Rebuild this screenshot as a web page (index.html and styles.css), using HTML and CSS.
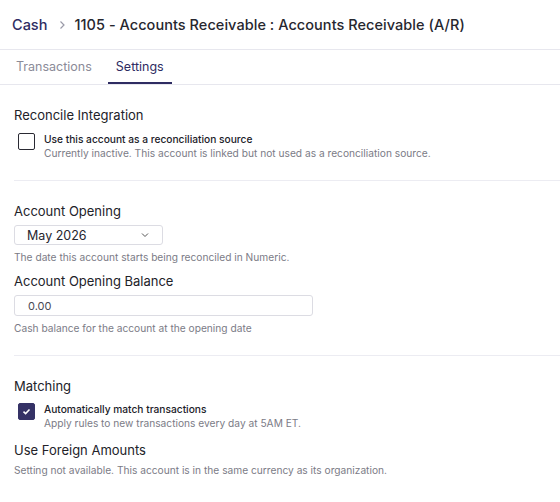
FILE: index.html
```html
<!DOCTYPE html>
<html>
<head lang="en">
    <meta charset="UTF-8">
    <link rel="stylesheet" href="styles.css">
    <title>Account Settings</title>
</head>
<body>
<div class="header">
    <a class="crumb" href="javascript:;">Cash</a>
    <svg class="crumb_sep" width="12" height="12" viewBox="0 0 12 12"><path d="M4.5 2.5 L8 6 L4.5 9.5" fill="none" stroke="#9a9aa8" stroke-width="1.2"/></svg>
    <span class="title">1105 - Accounts Receivable : Accounts Receivable (A/R)</span>
</div>
<div class="tabs">
    <a class="tab" href="javascript:;">Transactions</a>
    <a class="tab active" href="javascript:;">Settings</a>
</div>
<div class="content">
    <div class="section">
        <h3>Reconcile Integration</h3>
        <div class="check_row">
            <span class="box"></span>
            <div>
                <div class="check_label">Use this account as a reconciliation source</div>
                <div class="help">Currently inactive. This account is linked but not used as a reconciliation source.</div>
            </div>
        </div>
    </div>
    <div class="section">
        <h3>Account Opening</h3>
        <div class="select">
            <span>May 2026</span>
            <svg width="10" height="10" viewBox="0 0 10 10"><path d="M2 3.5 L5 6.5 L8 3.5" fill="none" stroke="#555" stroke-width="1"/></svg>
        </div>
        <div class="help under">The date this account starts being reconciled in Numeric.</div>
        <h3 class="second">Account Opening Balance</h3>
        <div class="input">0.00</div>
        <div class="help under">Cash balance for the account at the opening date</div>
    </div>
    <div class="section last">
        <h3>Matching</h3>
        <div class="check_row match">
            <span class="box checked">
                <svg width="11" height="11" viewBox="0 0 11 11"><path d="M2.5 5.6 L4.6 7.6 L8.5 3.4" fill="none" stroke="#fff" stroke-width="1.5"/></svg>
            </span>
            <div>
                <div class="check_label">Automatically match transactions</div>
                <div class="help">Apply rules to new transactions every day at 5AM ET.</div>
            </div>
        </div>
        <h3 class="second foreign">Use Foreign Amounts</h3>
        <div class="help plain">Setting not available. This account is in the same currency as its organization.</div>
    </div>
</div>
</body>
</html>
```
FILE: styles.css
```css
* {
    padding: 0;
    margin: 0;
    box-sizing: border-box;
}

body {
    font-family: Inter, "Noto Sans", sans-serif;
    color: #1f1f29;
    background: #fff;
}

a {
    text-decoration: none;
}

.header {
    height: 50px;
    display: flex;
    align-items: center;
    padding: 0 12px;
    border-bottom: 1px solid #e7e7ee;
    font-size: 14.5px;
    font-weight: 500;
}

.crumb {
    color: #2e2c62;
}

.crumb_sep {
    margin: 0 6px 0 9px;
}

.title {
    color: #27272f;
    letter-spacing: 0.05px;
}

.tabs {
    height: 35px;
    display: flex;
    gap: 8px;
    padding-left: 8px;
    border-bottom: 1px solid #e7e7ee;
}

.tab {
    display: flex;
    align-items: center;
    padding: 0 8px;
    font-size: 12.5px;
    color: #8b8b98;
    border-bottom: 2px solid transparent;
}

.tab.active {
    color: #2e2c62;
    border-bottom-color: #2e2c62;
}

.content {
    padding-left: 14px;
}

.section {
    border-bottom: 1px solid #ececf2;
    padding: 22px 0 20px;
}

.section.last {
    border-bottom: none;
}

h3 {
    font-size: 13px;
    font-weight: 400;
    color: #222229;
    line-height: 16px;
}

h3.second {
    margin-top: 9px;
}

h3.foreign {
    margin-top: 12px;
}

.check_row {
    display: flex;
    gap: 9px;
    margin-top: 9px;
    padding-left: 4px;
}

.check_row.match {
    margin-top: 8px;
}

.box {
    width: 17px;
    height: 17px;
    border: 1.5px solid #2a2a33;
    border-radius: 2px;
    flex: none;
    margin-top: 1px;
    display: flex;
    align-items: center;
    justify-content: center;
}

.box.checked {
    background: #353266;
    border-color: #353266;
}

.check_label {
    font-size: 10.2px;
    font-weight: 500;
    color: #202028;
    line-height: 14px;
}

.help {
    font-size: 10.2px;
    color: #7b7b86;
    line-height: 14px;
}

.help.under {
    margin-top: 5px;
}

.help.plain {
    margin-top: 5px;
}

.select {
    margin-top: 6px;
    width: 149px;
    height: 20px;
    border: 1px solid #dcdce3;
    border-radius: 3px;
    display: flex;
    align-items: center;
    justify-content: space-between;
    padding: 0 12px 0 12px;
    font-size: 12.5px;
    color: #26262e;
}

.input {
    margin-top: 6px;
    width: 299px;
    height: 21px;
    border: 1px solid #dcdce3;
    border-radius: 3px;
    display: flex;
    align-items: center;
    padding-left: 13px;
    font-size: 11px;
    color: #4a4a55;
}
```
